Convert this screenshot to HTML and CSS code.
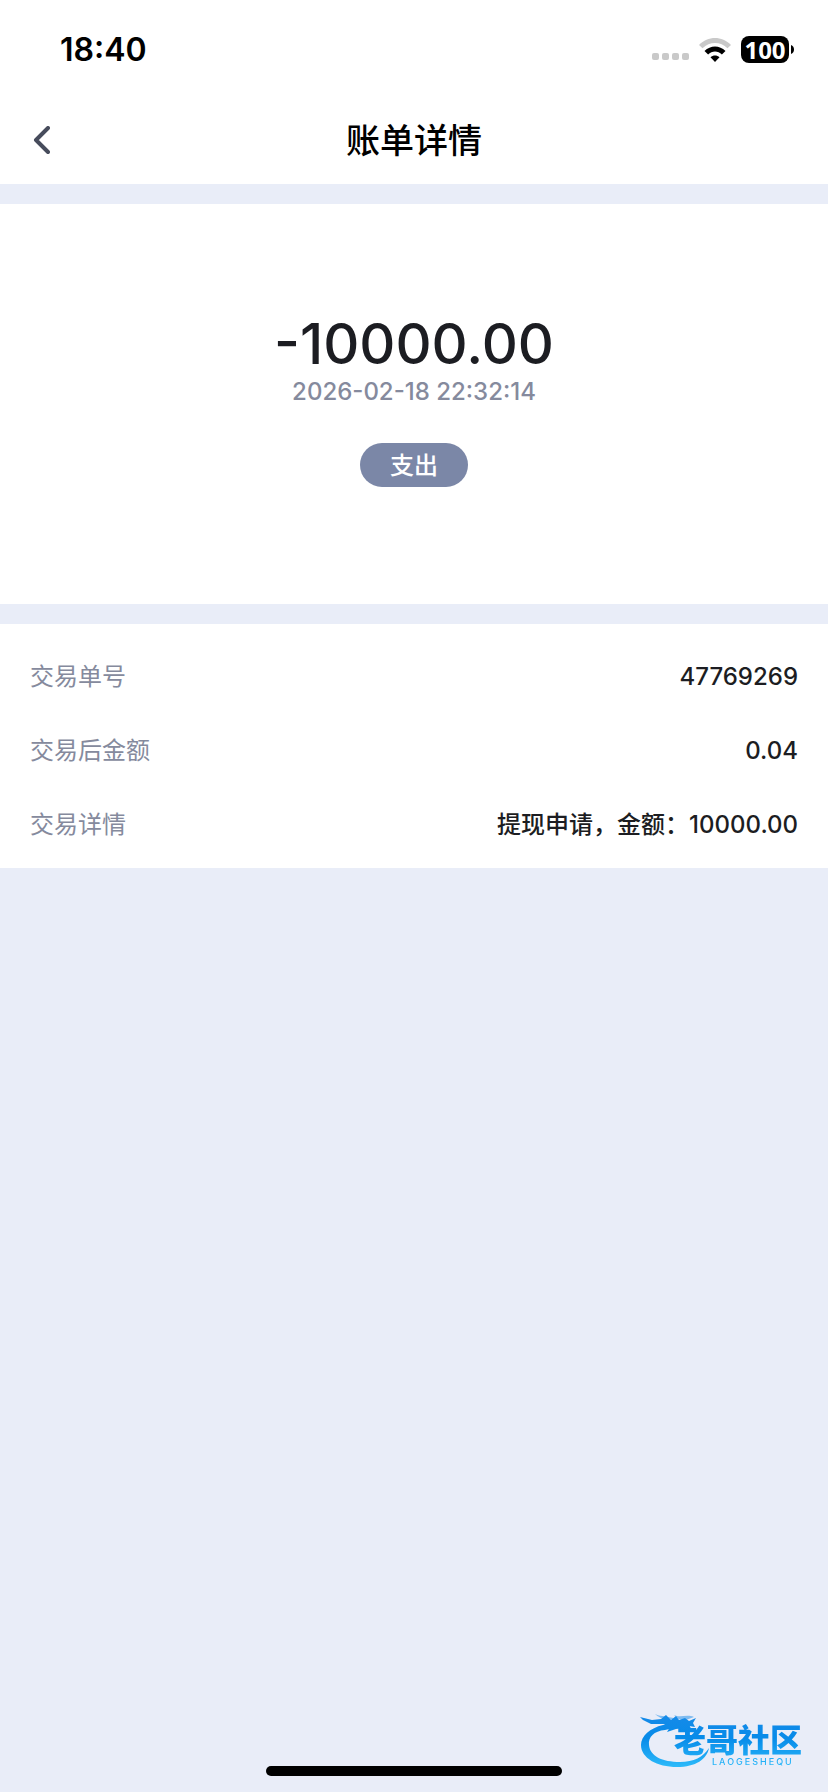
FILE: index.html
```html
<!DOCTYPE html>
<html lang="zh-CN">
<head>
<meta charset="utf-8">
<meta name="viewport" content="width=device-width, initial-scale=1">
<title>账单详情</title>
<link rel="stylesheet" href="styles.css">
</head>
<body>
<div class="status-bar">
  <time class="clock">18:40</time>
  <div class="indicators">
    <svg class="signal" width="37" height="8" viewBox="0 0 37 8" aria-hidden="true">
      <rect x="0" width="7" height="7" rx="2"/><rect x="10" width="7" height="7" rx="2"/><rect x="20" width="7" height="7" rx="2"/><rect x="30" width="7" height="7" rx="2"/>
    </svg>
    <svg class="wifi" width="32" height="24" viewBox="0 0 32 24" aria-hidden="true">
      <path d="M0 7C9-2.300 23-2.300 32 7L28.500 10.300C21.500 3.200 10.500 3.200 3.500 10.300Z" fill="#c9c9c9"/>
      <path d="M5.500 13C11.500 7 20.500 7 26.500 13L22.900 16.500C19 12.500 13 12.500 9.100 16.500Z"/>
      <path d="M11.500 19.200C14 16.800 18 16.800 20.500 19.200L16 24Z"/>
    </svg>
    <div class="battery"><span class="level">100</span><svg width="3" height="9" viewBox="0 0 3 9" aria-hidden="true"><path d="M0 0C4 1 4 8 0 9Z"/></svg></div>
  </div>
</div>
<header class="nav">
  <button class="back" type="button" aria-label="返回">
    <svg width="18" height="30" viewBox="0 0 18 30" aria-hidden="true"><path d="M16 2L4 14L16 26"/></svg>
  </button>
  <h1 class="title">账单详情</h1>
</header>
<main>
  <section class="summary">
    <p class="amount">-10000.00</p>
    <time class="date" datetime="2026-02-18T22:32:14">2026-02-18 22:32:14</time>
    <span class="tag">支出</span>
  </section>
  <dl class="details">
    <div class="row"><dt>交易单号</dt><dd>47769269</dd></div>
    <div class="row"><dt>交易后金额</dt><dd>0.04</dd></div>
    <div class="row"><dt>交易详情</dt><dd>提现申请，金额：10000.00</dd></div>
  </dl>
</main>
<svg class="brand" width="174" height="60" viewBox="0 0 174 60" role="img" aria-label="老哥社区 LAOGESHEQU">
  <defs>
    <linearGradient id="blue" gradientUnits="userSpaceOnUse" x1="0" y1="4" x2="0" y2="56">
      <stop offset="0" stop-color="#168ae8"/><stop offset=".45" stop-color="#078be9"/><stop offset="1" stop-color="#2cbafa"/>
    </linearGradient>
  </defs>
  <g fill="url(#blue)">
    <path d="M23 14C10 17 1 25 1 34C1 47 17 56 37 56C56 56 67 48 69 37C63 46 54 51 40 51C22 51 10 45 9 34C8 26 14 20 25 19L34 17L30 12Z"/>
    <path d="M0 6L12 9L21 8L26 4L31 9L36 5L39 9L45 7L49 10L56 7L53 12L55 16L49 15L54 20L45 17L36 18L27 21L30 16L22 17L25 13L11 13L3 9Z"/>
    <path d="M15 3C21 6 30 5 36 8L28 9C22 8 18 6 15 3ZM34 4C40 7 47 3 54 6L46 9L38 8Z" opacity=".5"/>
    <text class="brand-name" x="34" y="41">老哥社区</text>
    <text class="brand-latin" x="72" y="54">LAOGESHEQU</text>
  </g>
</svg>
<div class="home-indicator"></div>
</body>
</html>
```
FILE: styles.css
```css
* { box-sizing: border-box; }
body {
  margin: 0;
  min-height: 100vh;
  background: #e9edf8;
  color: #1c1d22;
  font-family: Inter, "Noto Sans CJK SC", sans-serif;
  font-size: 24px;
}
.status-bar {
  display: flex;
  justify-content: space-between;
  align-items: center;
  height: 98px;
  padding: 0 34px 0 60px;
  background: #fff;
  color: #000;
}
.clock { padding-top: 2px; font-size: 32px; font-weight: 600; line-height: 40px; }
.indicators { display: flex; align-items: center; gap: 10px; }
.signal { fill: #c9c9c9; margin-top: 16px; }
.wifi { margin-top: 2px; }
.battery { display: flex; align-items: center; gap: 2px; }
.level {
  width: 48px;
  border-radius: 8px;
  background: #000;
  color: #fff;
  font-family: "Open Sans", sans-serif;
  font-size: 24px;
  font-weight: 700;
  line-height: 27px;
  text-align: center;
}
.nav {
  display: grid;
  grid-template-columns: 68px 1fr 68px;
  align-items: center;
  height: 86px;
  padding: 0 16px;
  background: #fff;
}
.back {
  display: flex;
  padding: 16px;
  border: 0;
  background: none;
}
.back path {
  fill: none;
  stroke: #474c5c;
  stroke-width: 4;
  stroke-linecap: round;
  stroke-linejoin: round;
}
.title {
  margin: 0;
  color: #000;
  font-size: 34px;
  font-weight: 500;
  line-height: 48px;
  text-align: center;
}
.summary {
  display: flex;
  flex-direction: column;
  align-items: center;
  margin-top: 20px;
  padding: 107px 30px 117px;
  background: #fff;
}
.amount { margin: 0; font-size: 56px; font-weight: 500; line-height: 66px; }
.date { color: #858a9d; font-weight: 500; line-height: 30px; }
.tag {
  margin-top: 36px;
  padding: 2px 30px 0;
  border-radius: 22px;
  background: #7b87a7;
  color: #fff;
  font-weight: 500;
  line-height: 42px;
}
.details { margin: 20px 0 0; padding: 16px 30px 6px; background: #fff; }
.row {
  display: flex;
  justify-content: space-between;
  align-items: center;
  gap: 24px;
  line-height: 74px;
}
.row dt { color: #858a9d; }
.row dd { margin: 0; font-weight: 500; }
.brand { position: fixed; right: 14px; bottom: 21px; }
.brand-name { font-size: 32px; font-weight: 900; }
.brand-latin { font-size: 9px; font-weight: 500; letter-spacing: 2px; }
.home-indicator {
  position: fixed;
  bottom: 16px;
  left: 50%;
  width: 296px;
  height: 10px;
  border-radius: 5px;
  background: #000;
  transform: translateX(-50%);
}
```
